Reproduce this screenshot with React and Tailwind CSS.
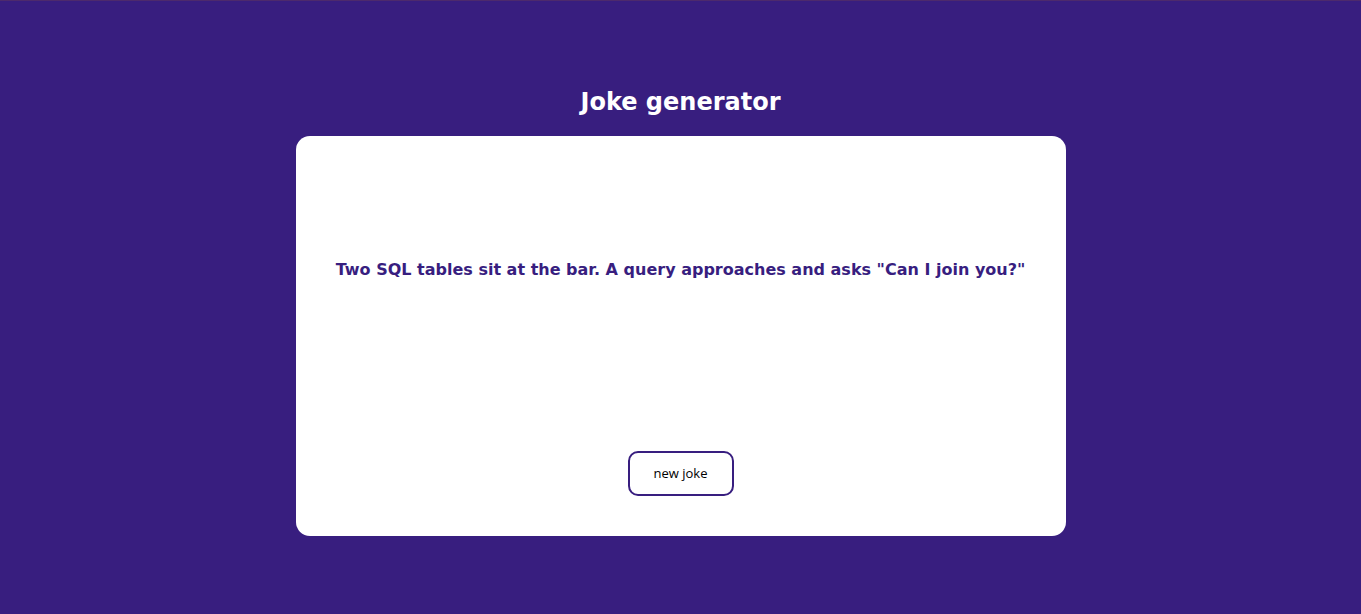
import React, { useState } from "react";

const jokes = [
  'Two SQL tables sit at the bar. A query approaches and asks "Can I join you?"',
];

const App = () => {
  const [joke, setJoke] = useState(jokes[0]);

  return (
    <div className="min-h-screen bg-[#381e7f] border-t border-[#4d2a6c] font-['DejaVu_Sans',sans-serif]">
      <div className="flex flex-col items-center pt-[85px]">
        {/* Заголовок */}
        <h1 className="text-2xl leading-8 font-bold text-white mb-[18px]">Joke generator</h1>

        {/* Карточка */}
        <div className="w-[770px] h-[400px] bg-white rounded-[14px] flex flex-col items-center px-10 pt-[122px] pb-10">
          <p className="text-base leading-6 font-bold text-[#381e7f] text-center">{joke}</p>
          <button
            onClick={() => setJoke(jokes[Math.floor(Math.random() * jokes.length)])}
            className="mt-auto w-[106px] h-[45px] pt-px border-2 border-[#381e7f] rounded-[10px] bg-white text-[13px] text-black font-['Open_Sans',sans-serif]"
          >
            new joke
          </button>
        </div>
      </div>
    </div>
  );
};

export default App;
